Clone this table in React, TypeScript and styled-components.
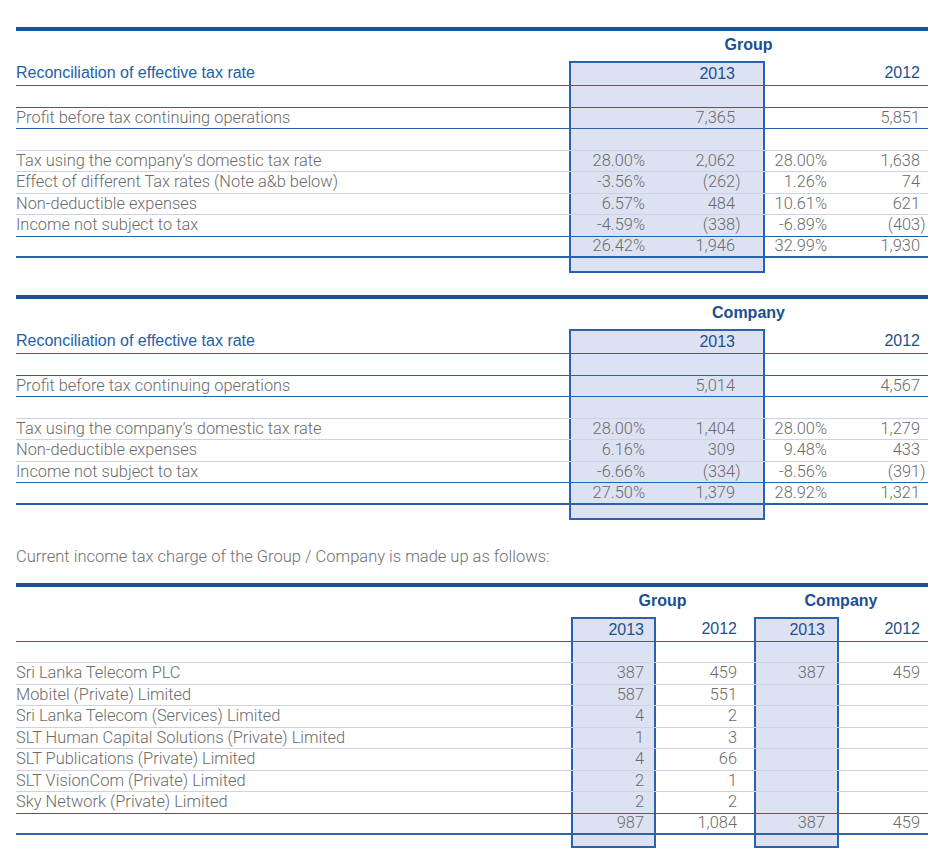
import React from 'react';
import styled, { createGlobalStyle, css } from 'styled-components';

const Global = createGlobalStyle`
  html, body { margin: 0; padding: 0; background: #ffffff; }
  body {
    font-family: Roboto, "Liberation Sans", Arial, sans-serif;
    font-weight: 300;
    color: #6b6b6b;
  }
`;

const BLUE = '#2a63ab';
const DARK = '#1a5299';
const LIGHT = '#cdd2e6';
const FILL = '#dde2f2';

type Col = { w: number; pr: number; boxL?: boolean; boxR?: boolean };

const Page = styled.div`
  width: 912px;
  padding: 27px 0 0 16px;
  display: flex;
  flex-direction: column;
`;

const Table = styled.section<{ $mt: number }>`
  display: flex;
  flex-direction: column;
  margin-top: ${(p) => p.$mt}px;
  border-top: 4px solid ${DARK};
`;

const Row = styled.div<{ $cols: string; $h: number; $line?: 'light' | 'blue' | 'thick' | 'none' }>`
  display: grid;
  grid-template-columns: ${(p) => p.$cols};
  height: ${(p) => p.$h}px;
  box-sizing: border-box;
  ${(p) =>
    p.$line === 'light'
      ? css`border-bottom: 1px solid ${LIGHT};`
      : p.$line === 'blue'
      ? css`border-bottom: 1px solid ${BLUE};`
      : p.$line === 'thick'
      ? css`border-bottom: 2px solid ${BLUE};`
      : ''}
`;

const Heading = styled.div<{ $span: number }>`
  grid-column: span ${(p) => p.$span};
  text-align: center;
  padding-top: 5px;
  font-family: "Liberation Sans", Arial, sans-serif;
  font-weight: 700;
  font-size: 16px;
  line-height: 18px;
  color: #1b4f93;
`;

const Cell = styled.div<{ $pr?: number; $boxL?: boolean; $boxR?: boolean; $top?: boolean; $bottom?: boolean; $num?: boolean }>`
  display: flex;
  align-items: center;
  justify-content: ${(p) => (p.$num ? 'flex-end' : 'flex-start')};
  padding-right: ${(p) => p.$pr ?? 0}px;
  box-sizing: border-box;
  min-width: 0;
  font-size: 16.4px;
  line-height: 18px;
  white-space: nowrap;
  ${(p) => (p.$boxL || p.$boxR) && css`background: ${FILL};`}
  ${(p) => p.$boxL && css`border-left: 2px solid ${BLUE};`}
  ${(p) => p.$boxR && css`border-right: 2px solid ${BLUE};`}
  ${(p) => (p.$boxL || p.$boxR) && p.$top && css`border-top: 2px solid ${BLUE};`}
  ${(p) => (p.$boxL || p.$boxR) && p.$bottom && css`border-bottom: 2px solid ${BLUE};`}
`;

const TitleText = styled.span`
  font-family: "Liberation Sans", Arial, sans-serif;
  font-weight: 400;
  font-size: 16px;
  color: #2360a9;
`;

const Year = styled.span`
  font-family: "Liberation Sans", Arial, sans-serif;
  font-weight: 400;
  font-size: 16px;
  color: #1d4f92;
`;

const Hang = styled.span`
  margin-right: -0.34em;
`;

const Note = styled.p`
  margin: 27px 0 0 0;
  font-size: 16.5px;
  line-height: 20px;
  color: #707070;
`;

const t1Cols: Col[] = [
  { w: 87, pr: 11, boxL: true },
  { w: 109, pr: 28, boxR: true },
  { w: 74, pr: 12 },
  { w: 89, pr: 8 },
];
const t3Cols: Col[] = [
  { w: 85, pr: 10, boxL: true, boxR: true },
  { w: 98, pr: 17 },
  { w: 85, pr: 12, boxL: true, boxR: true },
  { w: 89, pr: 8 },
];

type Line = 'light' | 'blue' | 'thick' | 'none';
type DataRow = { label: string; vals: string[]; line: Line };

const Num = ({ v }: { v: string }) => {
  if (v.startsWith('(') && v.endsWith(')')) {
    return (
      <>
        {v.slice(0, -1)}
        <Hang>)</Hang>
      </>
    );
  }
  return <>{v}</>;
};

const colsTemplate = (cols: Col[]) => `1fr ${cols.map((c) => `${c.w}px`).join(' ')}`;

type TableProps = {
  mt: number;
  cols: Col[];
  headings: { label: string; span: number }[];
  title?: string;
  years: string[];
  rows: DataRow[];
  tail: number;
};

const FinTable = ({ mt, cols, headings, title, years, rows, tail }: TableProps) => {
  const tpl = colsTemplate(cols);
  return (
    <Table $mt={mt}>
      <Row $cols={tpl} $h={30}>
        <div />
        {headings.map((h) => (
          <Heading key={h.label} $span={h.span}>
            {h.label}
          </Heading>
        ))}
      </Row>
      <Row $cols={tpl} $h={25} $line="blue">
        <Cell>{title && <TitleText>{title}</TitleText>}</Cell>
        {cols.map((c, i) => (
          <Cell key={i} $num $pr={c.pr} $boxL={c.boxL} $boxR={c.boxR} $top>
            <Year>{years[i]}</Year>
          </Cell>
        ))}
      </Row>
      {rows.map((r, ri) => (
        <Row key={ri} $cols={tpl} $h={21.5} $line={r.line}>
          <Cell>{r.label}</Cell>
          {cols.map((c, i) => (
            <Cell key={i} $num $pr={c.pr} $boxL={c.boxL} $boxR={c.boxR}>
              {r.vals[i] ? <Num v={r.vals[i]} /> : null}
            </Cell>
          ))}
        </Row>
      ))}
      <Row $cols={tpl} $h={tail}>
        <div />
        {cols.map((c, i) => (
          <Cell key={i} $boxL={c.boxL} $boxR={c.boxR} $bottom />
        ))}
      </Row>
    </Table>
  );
};

const groupRows: DataRow[] = [
  { label: '', vals: [], line: 'blue' },
  { label: 'Profit before tax continuing operations', vals: ['', '7,365', '', '5,851'], line: 'blue' },
  { label: '', vals: [], line: 'light' },
  { label: 'Tax using the company\u2019s domestic tax rate', vals: ['28.00%', '2,062', '28.00%', '1,638'], line: 'light' },
  { label: 'Effect of different Tax rates (Note a&b below)', vals: ['-3.56%', '(262)', '1.26%', '74'], line: 'light' },
  { label: 'Non-deductible expenses', vals: ['6.57%', '484', '10.61%', '621'], line: 'light' },
  { label: 'Income not subject to tax', vals: ['-4.59%', '(338)', '-6.89%', '(403)'], line: 'blue' },
  { label: '', vals: ['26.42%', '1,946', '32.99%', '1,930'], line: 'thick' },
];

const companyRows: DataRow[] = [
  { label: '', vals: [], line: 'blue' },
  { label: 'Profit before tax continuing operations', vals: ['', '5,014', '', '4,567'], line: 'blue' },
  { label: '', vals: [], line: 'light' },
  { label: 'Tax using the company\u2019s domestic tax rate', vals: ['28.00%', '1,404', '28.00%', '1,279'], line: 'light' },
  { label: 'Non-deductible expenses', vals: ['6.16%', '309', '9.48%', '433'], line: 'light' },
  { label: 'Income not subject to tax', vals: ['-6.66%', '(334)', '-8.56%', '(391)'], line: 'blue' },
  { label: '', vals: ['27.50%', '1,379', '28.92%', '1,321'], line: 'thick' },
];

const chargeRows: DataRow[] = [
  { label: '', vals: [], line: 'light' },
  { label: 'Sri Lanka Telecom PLC', vals: ['387', '459', '387', '459'], line: 'light' },
  { label: 'Mobitel (Private) Limited', vals: ['587', '551', '', ''], line: 'light' },
  { label: 'Sri Lanka Telecom (Services) Limited', vals: ['4', '2', '', ''], line: 'light' },
  { label: 'SLT Human Capital Solutions (Private) Limited', vals: ['1', '3', '', ''], line: 'light' },
  { label: 'SLT Publications (Private) Limited', vals: ['4', '66', '', ''], line: 'light' },
  { label: 'SLT VisionCom (Private) Limited', vals: ['2', '1', '', ''], line: 'light' },
  { label: 'Sky Network (Private) Limited', vals: ['2', '2', '', ''], line: 'blue' },
  { label: '', vals: ['987', '1,084', '387', '459'], line: 'thick' },
];

export default function App() {
  return (
    <>
      <Global />
      <Page>
        <FinTable
          mt={0}
          cols={t1Cols}
          headings={[{ label: 'Group', span: 4 }]}
          title="Reconciliation of effective tax rate"
          years={['', '2013', '', '2012']}
          rows={groupRows}
          tail={15}
        />
        <FinTable
          mt={22}
          cols={t1Cols}
          headings={[{ label: 'Company', span: 4 }]}
          title="Reconciliation of effective tax rate"
          years={['', '2013', '', '2012']}
          rows={companyRows}
          tail={15}
        />
        <Note>Current income tax charge of the Group / Company is made up as follows:</Note>
        <FinTable
          mt={16}
          cols={t3Cols}
          headings={[
            { label: 'Group', span: 2 },
            { label: 'Company', span: 2 },
          ]}
          years={['2013', '2012', '2013', '2012']}
          rows={chargeRows}
          tail={13}
        />
      </Page>
    </>
  );
}
